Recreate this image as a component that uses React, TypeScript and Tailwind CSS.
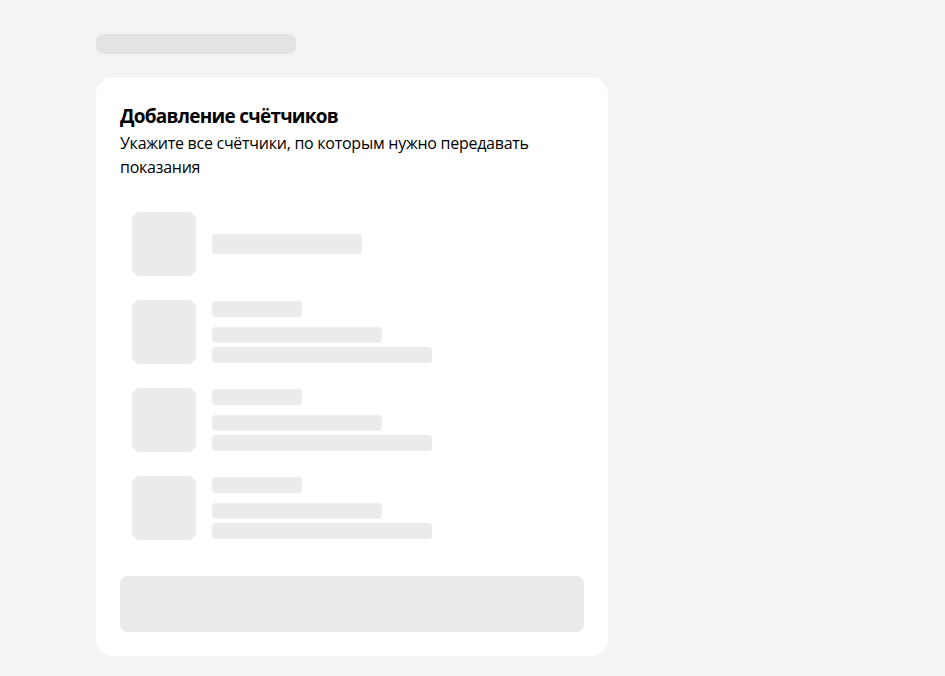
import React from "react";

function Item({ single }: { single?: boolean }) {
  return (
    <div className="flex gap-4 px-3 py-3">
      <div className="w-16 h-16 rounded-lg bg-[#ebebeb] shrink-0" />
      {single ? (
        <div className="flex items-center">
          <div className="w-[150px] h-5 rounded-[4px] bg-[#ebebeb]" />
        </div>
      ) : (
        <div className="flex flex-col pt-px">
          <div className="w-[90px] h-4 rounded-[4px] bg-[#ebebeb]" />
          <div className="w-[170px] h-4 rounded-[4px] bg-[#ebebeb] mt-[10px]" />
          <div className="w-[220px] h-4 rounded-[4px] bg-[#ebebeb] mt-1" />
        </div>
      )}
    </div>
  );
}

export default function App() {
  return (
    <div
      className="min-h-[676px] bg-[#f4f4f6] pl-24 pt-[34px]"
      style={{ fontFamily: '"Open Sans", "Noto Sans", sans-serif' }}
    >
      <div className="w-[200px] h-5 rounded-lg bg-[#e3e3e6]" />
      <div className="mt-6 w-[512px] bg-white rounded-2xl px-6 pt-[26px] pb-6">
        <h1 className="text-[19px] leading-6 font-bold text-black tracking-[-0.75px]">
          <span className="inline-block">Добавление счётчиков</span>
        </h1>
        <p className="mt-[3px] text-[16px] leading-6 text-black tracking-[-0.26px]">
          Укажите все счётчики, по которым нужно передавать показания
        </p>
        <div className="mt-[21px] flex flex-col">
          <Item single />
          <Item />
          <Item />
          <Item />
        </div>
        <div className="mt-6 h-14 rounded-lg bg-[#ebebeb]" />
      </div>
    </div>
  );
}
